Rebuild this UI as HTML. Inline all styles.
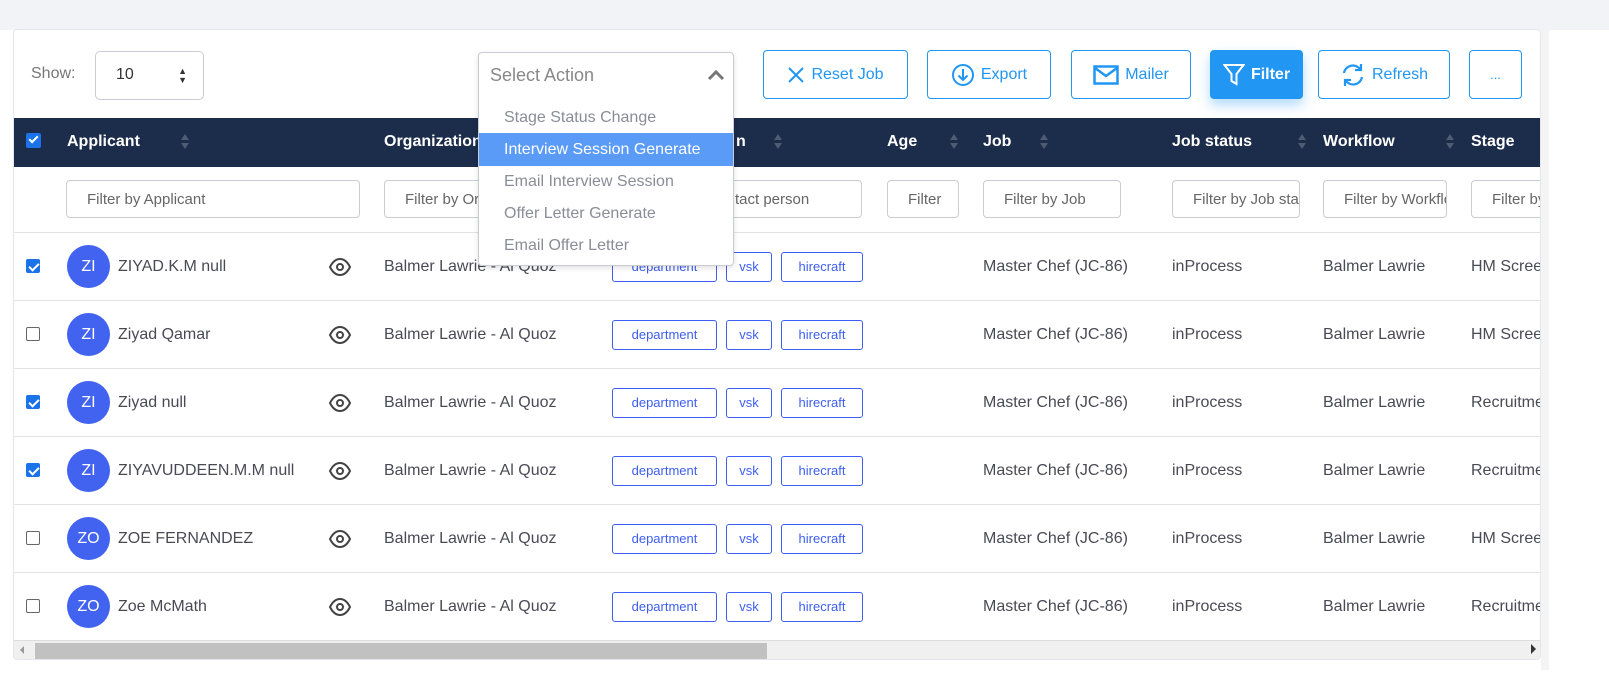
<!DOCTYPE html>
<html><head><style>
*{box-sizing:border-box;margin:0;padding:0}
body{width:1609px;height:677px;background:#fff;font-family:"Liberation Sans",sans-serif;color:#4a4a55;position:relative;overflow:hidden;font-size:15px}
.top{position:absolute;left:0;top:0;width:1609px;height:30px;background:#f2f3f6}
.card{position:absolute;left:13px;top:29px;width:1528px;height:631px;border:1px solid #e3e6ee;border-radius:4px;background:#fff;overflow:hidden}
.rgut{position:absolute;left:1541px;top:30px;width:8px;height:640px;background:#f4f4f4}
.abs{position:absolute}
.btn{position:absolute;top:50px;height:49px;border:1px solid #2196f3;border-radius:4px;color:#2196f3;font-size:16px;display:flex;align-items:center;justify-content:center;gap:6px;background:#fff}
.hdr{position:absolute;left:0;top:88px;width:1528px;height:49px;background:#1c2c4b;color:#fff;font-size:16px;font-weight:bold}
.hdr span{position:absolute;top:15px}
.sort{position:absolute;top:16px;width:8px;height:16px}
.sort:before{content:"";position:absolute;left:0;top:0;border:4px solid transparent;border-bottom:6px solid #4f5b73;border-top:0}
.sort:after{content:"";position:absolute;left:0;top:9px;border:4px solid transparent;border-top:6px solid #4f5b73;border-bottom:0}
.fin{position:absolute;top:150px;height:38px;border:1px solid #c9ccd3;border-radius:4px;color:#666;font-size:15px;padding:10px 0 0 20px;overflow:hidden;white-space:nowrap}
.row{position:absolute;left:0;width:1528px;height:68px;border-top:1px solid #e2e2e2}
.row>*{position:absolute}
.cb{left:12px;top:26px;width:14px;height:14px;border:1px solid #666;border-radius:2px}
.cb.on{background:#1a73e8;border-color:#1a73e8}
.cb.on:after{content:"";position:absolute;left:4px;top:1px;width:4px;height:8px;border:solid #fff;border-width:0 2px 2px 0;transform:rotate(45deg)}
.av{left:53px;top:12px;width:43px;height:43px;border-radius:50%;background:#4262f0;color:#fff;font-size:16px;text-align:center;line-height:43px}
.t{top:25px;font-size:16px;white-space:nowrap}
.tag{top:19px;height:30px;border:1px solid #3d5ef0;border-radius:3px;color:#3d5ef0;font-size:13px;text-align:center;line-height:28px}
.eye{left:314px;top:24px}
.menu{position:absolute;left:478px;top:52px;width:256px;height:214px;border:1px solid #c9ccd3;border-radius:4px;background:#fff;box-shadow:0 2px 6px rgba(0,0,0,.12)}
.menu div{position:absolute;left:0;width:254px;height:33px;padding-left:25px;line-height:33px;font-size:16px;color:#8a8d96;white-space:nowrap}
</style></head><body>
<div class="top"></div>
<div class="rgut"></div>
<div class="card">
 <div class="abs" style="left:17px;top:35px;font-size:16px;color:#777">Show:</div>
 <div class="abs" style="left:81px;top:21px;width:109px;height:49px;border:1px solid #c9ccd3;border-radius:5px;font-size:16px;padding:14px 0 0 20px;color:#333">10<span style="position:absolute;right:16px;top:15px;font-size:9px;line-height:9px">▲<br>▼</span></div>

 <div class="hdr">
  <div style="position:absolute;left:12px;top:15px;width:15px;height:15px;background:#1a73e8;border-radius:2px"></div>
  <div style="position:absolute;left:17px;top:16px;width:5px;height:9px;border:solid #fff;border-width:0 2px 2px 0;transform:rotate(45deg)"></div>
  <span style="left:53px">Applicant</span><i class="sort" style="left:167px"></i>
  <span style="left:370px">Organization</span>
  <span style="left:722px">n</span><i class="sort" style="left:760px"></i>
  <span style="left:873px">Age</span><i class="sort" style="left:936px"></i>
  <span style="left:969px">Job</span><i class="sort" style="left:1026px"></i>
  <span style="left:1158px">Job status</span><i class="sort" style="left:1284px"></i>
  <span style="left:1309px">Workflow</span><i class="sort" style="left:1432px"></i>
  <span style="left:1457px">Stage</span>
 </div>
 <div class="fin" style="left:52px;width:294px">Filter by Applicant</div>
 <div class="fin" style="left:370px;width:120px">Filter by Organization</div>
 <div class="fin" style="left:640px;width:208px;padding-left:80px">tact person</div>
 <div class="fin" style="left:873px;width:72px;padding-left:20px">Filter</div>
 <div class="fin" style="left:969px;width:138px">Filter by Job</div>
 <div class="fin" style="left:1158px;width:128px">Filter by Job status</div>
 <div class="fin" style="left:1309px;width:124px">Filter by Workflow</div>
 <div class="fin" style="left:1457px;width:90px">Filter by</div>

 <div class="row" style="top:202px"><i class="cb on"></i><div class="av">ZI</div><div class="t" style="left:104px">ZIYAD.K.M null</div><svg class="eye" width="24" height="20" viewBox="0 0 24 20"><path d="M2 10C5 4 9 2 12 2s7 2 10 8c-3 6-7 8-10 8S5 16 2 10z" fill="none" stroke="#444" stroke-width="2"/><circle cx="12" cy="10" r="3" fill="none" stroke="#444" stroke-width="2"/></svg><div class="t" style="left:370px">Balmer Lawrie - Al Quoz</div><div class="tag" style="left:598px;width:105px">department</div><div class="tag" style="left:712px;width:46px">vsk</div><div class="tag" style="left:767px;width:82px">hirecraft</div><div class="t" style="left:969px">Master Chef (JC-86)</div><div class="t" style="left:1158px">inProcess</div><div class="t" style="left:1309px">Balmer Lawrie</div><div class="t" style="left:1457px">HM Screening</div></div>
 <div class="row" style="top:270px"><i class="cb"></i><div class="av">ZI</div><div class="t" style="left:104px">Ziyad Qamar</div><svg class="eye" width="24" height="20" viewBox="0 0 24 20"><path d="M2 10C5 4 9 2 12 2s7 2 10 8c-3 6-7 8-10 8S5 16 2 10z" fill="none" stroke="#444" stroke-width="2"/><circle cx="12" cy="10" r="3" fill="none" stroke="#444" stroke-width="2"/></svg><div class="t" style="left:370px">Balmer Lawrie - Al Quoz</div><div class="tag" style="left:598px;width:105px">department</div><div class="tag" style="left:712px;width:46px">vsk</div><div class="tag" style="left:767px;width:82px">hirecraft</div><div class="t" style="left:969px">Master Chef (JC-86)</div><div class="t" style="left:1158px">inProcess</div><div class="t" style="left:1309px">Balmer Lawrie</div><div class="t" style="left:1457px">HM Screening</div></div>
 <div class="row" style="top:338px"><i class="cb on"></i><div class="av">ZI</div><div class="t" style="left:104px">Ziyad null</div><svg class="eye" width="24" height="20" viewBox="0 0 24 20"><path d="M2 10C5 4 9 2 12 2s7 2 10 8c-3 6-7 8-10 8S5 16 2 10z" fill="none" stroke="#444" stroke-width="2"/><circle cx="12" cy="10" r="3" fill="none" stroke="#444" stroke-width="2"/></svg><div class="t" style="left:370px">Balmer Lawrie - Al Quoz</div><div class="tag" style="left:598px;width:105px">department</div><div class="tag" style="left:712px;width:46px">vsk</div><div class="tag" style="left:767px;width:82px">hirecraft</div><div class="t" style="left:969px">Master Chef (JC-86)</div><div class="t" style="left:1158px">inProcess</div><div class="t" style="left:1309px">Balmer Lawrie</div><div class="t" style="left:1457px">Recruitment</div></div>
 <div class="row" style="top:406px"><i class="cb on"></i><div class="av">ZI</div><div class="t" style="left:104px">ZIYAVUDDEEN.M.M null</div><svg class="eye" width="24" height="20" viewBox="0 0 24 20"><path d="M2 10C5 4 9 2 12 2s7 2 10 8c-3 6-7 8-10 8S5 16 2 10z" fill="none" stroke="#444" stroke-width="2"/><circle cx="12" cy="10" r="3" fill="none" stroke="#444" stroke-width="2"/></svg><div class="t" style="left:370px">Balmer Lawrie - Al Quoz</div><div class="tag" style="left:598px;width:105px">department</div><div class="tag" style="left:712px;width:46px">vsk</div><div class="tag" style="left:767px;width:82px">hirecraft</div><div class="t" style="left:969px">Master Chef (JC-86)</div><div class="t" style="left:1158px">inProcess</div><div class="t" style="left:1309px">Balmer Lawrie</div><div class="t" style="left:1457px">Recruitment</div></div>
 <div class="row" style="top:474px"><i class="cb"></i><div class="av">ZO</div><div class="t" style="left:104px">ZOE FERNANDEZ</div><svg class="eye" width="24" height="20" viewBox="0 0 24 20"><path d="M2 10C5 4 9 2 12 2s7 2 10 8c-3 6-7 8-10 8S5 16 2 10z" fill="none" stroke="#444" stroke-width="2"/><circle cx="12" cy="10" r="3" fill="none" stroke="#444" stroke-width="2"/></svg><div class="t" style="left:370px">Balmer Lawrie - Al Quoz</div><div class="tag" style="left:598px;width:105px">department</div><div class="tag" style="left:712px;width:46px">vsk</div><div class="tag" style="left:767px;width:82px">hirecraft</div><div class="t" style="left:969px">Master Chef (JC-86)</div><div class="t" style="left:1158px">inProcess</div><div class="t" style="left:1309px">Balmer Lawrie</div><div class="t" style="left:1457px">HM Screening</div></div>
 <div class="row" style="top:542px"><i class="cb"></i><div class="av">ZO</div><div class="t" style="left:104px">Zoe McMath</div><svg class="eye" width="24" height="20" viewBox="0 0 24 20"><path d="M2 10C5 4 9 2 12 2s7 2 10 8c-3 6-7 8-10 8S5 16 2 10z" fill="none" stroke="#444" stroke-width="2"/><circle cx="12" cy="10" r="3" fill="none" stroke="#444" stroke-width="2"/></svg><div class="t" style="left:370px">Balmer Lawrie - Al Quoz</div><div class="tag" style="left:598px;width:105px">department</div><div class="tag" style="left:712px;width:46px">vsk</div><div class="tag" style="left:767px;width:82px">hirecraft</div><div class="t" style="left:969px">Master Chef (JC-86)</div><div class="t" style="left:1158px">inProcess</div><div class="t" style="left:1309px">Balmer Lawrie</div><div class="t" style="left:1457px">Recruitment</div></div>
 <div class="abs" style="left:0;top:610px;width:1528px;height:21px;background:#f0f0f0;border-top:1px solid #ddd"></div>
 <div class="abs" style="left:21px;top:613px;width:732px;height:17px;background:#c1c1c1"></div>
 <div class="abs" style="left:6px;top:616px;border:4px solid transparent;border-right:4px solid #999;border-left:0;height:0"></div>
</div>
<div class="abs" style="left:1531px;top:644px;border:5px solid transparent;border-left:5px solid #333;border-right:0"></div>

<div class="btn" style="left:763px;width:145px"><svg width="18" height="18" viewBox="0 0 18 18"><path d="M2 2L16 16M16 2L2 16" stroke="#2196f3" stroke-width="2"/></svg>Reset Job</div>
<div class="btn" style="left:927px;width:124px"><svg width="24" height="24" viewBox="0 0 24 24"><circle cx="12" cy="12" r="10" fill="none" stroke="#2196f3" stroke-width="2"/><path d="M12 6v11M7.5 12.5L12 17l4.5-4.5" fill="none" stroke="#2196f3" stroke-width="2"/></svg>Export</div>
<div class="btn" style="left:1071px;width:120px"><svg width="26" height="20" viewBox="0 0 26 20"><rect x="1.5" y="1.5" width="23" height="17" fill="none" stroke="#2196f3" stroke-width="2.5"/><path d="M2 3l11 8 11-8" fill="none" stroke="#2196f3" stroke-width="2.5"/></svg>Mailer</div>
<div class="btn" style="left:1210px;width:93px;background:#2196f3;color:#fff;font-weight:bold;box-shadow:0 6px 12px rgba(33,150,243,.35)"><svg width="22" height="24" viewBox="0 0 22 24"><path d="M1.5 2h19l-7 9v10l-5-3v-7z" fill="none" stroke="#fff" stroke-width="2"/></svg>Filter</div>
<div class="btn" style="left:1318px;width:132px"><svg width="26" height="26" viewBox="0 0 26 26"><path d="M4 11A9 9 0 0 1 20 7M22 15A9 9 0 0 1 6 19" fill="none" stroke="#2196f3" stroke-width="2.2"/><path d="M21 2v6h-6M5 24v-6h6" fill="none" stroke="#2196f3" stroke-width="2.2"/></svg>Refresh</div>
<div class="btn" style="left:1469px;width:53px;font-size:13px">...</div>

<div class="menu">
 <div style="top:0;height:43px;line-height:45px;padding-left:11px;font-size:18px;color:#888">Select Action<svg style="position:absolute;right:8px;top:16px" width="18" height="12" viewBox="0 0 18 12"><path d="M2 10L9 3l7 7" fill="none" stroke="#777" stroke-width="3"/></svg></div>
 <div style="top:48px">Stage Status Change</div>
 <div style="top:80px;background:#5b9bf8;color:#fff">Interview Session Generate</div>
 <div style="top:112px">Email Interview Session</div>
 <div style="top:144px">Offer Letter Generate</div>
 <div style="top:176px">Email Offer Letter</div>
</div>
</body></html>
